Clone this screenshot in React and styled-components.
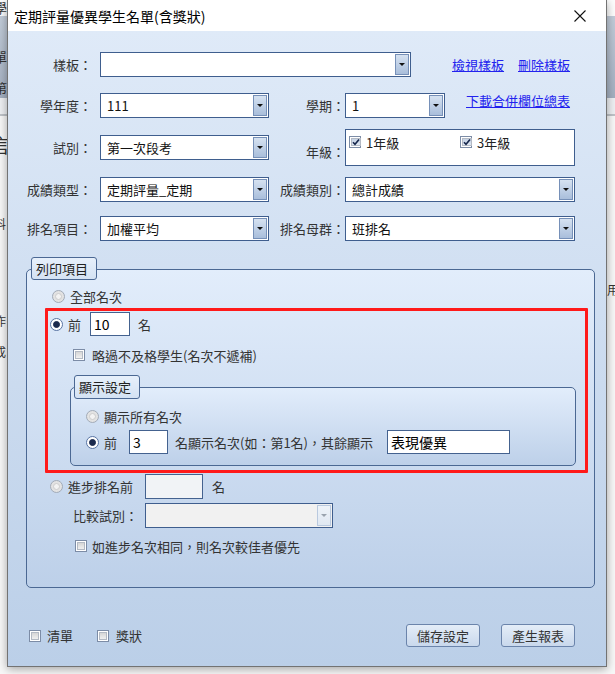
import React from "react";
import styled, { createGlobalStyle } from "styled-components";

const GlobalStyle = createGlobalStyle`
  html, body { margin: 0; padding: 0; }
  body {
    width: 615px;
    height: 674px;
    overflow: hidden;
    font-family: "Noto Sans CJK TC", "Noto Sans", sans-serif;
    font-size: 13px;
    color: #333;
    background: linear-gradient(
      to bottom,
      #fdfdfd 0 16px,
      #c2ccd9 16px,
      #a3afc0 98px,
      #eef0f3 98px,
      #eef0f3 114px,
      #bfc3c8 114px,
      #bfc3c8 116px,
      #f8f8f8 116px
    );
  }
`;

const Desktop = styled.div`
  position: relative;
  width: 615px;
  height: 674px;
  overflow: hidden;
`;

const BackChar = styled.span`
  position: absolute;
  font-size: ${({ $size }) => $size || 13}px;
  color: #333;
  line-height: 1;
`;

const Dialog = styled.div`
  position: relative;
  z-index: 1;
  margin-left: 7px;
  width: 600px;
  height: 667px;
  box-sizing: border-box;
  border: 1px solid #737373;
  border-top: none;
  display: flex;
  flex-direction: column;
  box-shadow: 0 2px 9px rgba(0, 0, 0, 0.35);
`;

const TitleBar = styled.div`
  height: 31px;
  flex-shrink: 0;
  background: #fff;
  display: flex;
  align-items: center;
  padding-left: 6px;
  font-size: 14px;
  color: #000;
`;

const CloseBox = styled.div`
  margin-left: auto;
  width: 52px;
  height: 31px;
  display: flex;
  align-items: center;
  justify-content: center;
`;

const Body = styled.div`
  flex: 1;
  background: linear-gradient(to bottom, #dfeaf8, #bbcfe8);
  padding-top: 21px;
  display: flex;
  flex-direction: column;
`;

const Row = styled.div`
  display: flex;
  align-items: center;
  height: ${({ $h }) => $h || 25}px;
  margin-top: ${({ $mt }) => $mt || 0}px;
  padding-left: ${({ $pl }) => $pl || 0}px;
  flex-shrink: 0;
`;

const Label = styled.div`
  width: ${({ $w }) => $w}px;
  margin-right: ${({ $mr }) => $mr || 0}px;
  padding-top: ${({ $pt }) => $pt || 0}px;
  text-align: right;
  white-space: nowrap;
  color: #333;
  flex-shrink: 0;
`;

const Text = styled.span`
  margin-left: ${({ $ml }) => $ml || 0}px;
  width: ${({ $w }) => ($w ? `${$w}px` : "auto")};
  white-space: nowrap;
  color: #333;
  flex-shrink: 0;
`;

const Combo = styled.div`
  width: ${({ $w }) => $w}px;
  height: 25px;
  box-sizing: border-box;
  border: 1px solid #3f5e8e;
  background: ${({ $disabled }) => ($disabled ? "#f1f1f1" : "#fff")};
  display: flex;
  align-items: center;
  padding: 1px 1px 1px 6px;
  flex-shrink: 0;
`;

const ComboValue = styled.span`
  flex: 1;
  color: #111;
  white-space: nowrap;
`;

const DropButton = styled.span`
  width: 14px;
  align-self: stretch;
  box-sizing: border-box;
  border: 1px solid ${({ $disabled }) => ($disabled ? "#b9c9df" : "#7690b8")};
  background: ${({ $disabled }) =>
    $disabled
      ? "linear-gradient(#eef3f9, #e0e8f2)"
      : "linear-gradient(#d6e2f1, #a9bedb)"};
  display: flex;
  align-items: center;
  justify-content: center;

  &::after {
    content: "";
    border-left: 3px solid transparent;
    border-right: 3px solid transparent;
    border-top: 3px solid ${({ $disabled }) => ($disabled ? "#9aa3ae" : "#111")};
  }
`;

const ListBox = styled.div`
  width: 230px;
  height: 37px;
  box-sizing: border-box;
  border: 1px solid #3f5e8e;
  background: #fff;
  display: flex;
  align-items: flex-start;
  padding: 3px 0 0 3px;
  flex-shrink: 0;
`;

const ListItem = styled.div`
  width: ${({ $w }) => $w}px;
  display: flex;
  align-items: center;
  gap: 5px;
  height: 18px;
  color: #222;
`;

const LinkText = styled.span`
  margin-left: ${({ $ml }) => $ml || 0}px;
  color: #2222ee;
  text-decoration: underline;
  white-space: nowrap;
  align-self: ${({ $top }) => ($top ? "flex-start" : "center")};
  line-height: 16px;
`;

const Group = styled.div`
  position: relative;
  box-sizing: border-box;
  margin: ${({ $margin }) => $margin};
  border: 1px solid #4b6893;
  border-radius: 5px;
  background: linear-gradient(to bottom, #e2edfb, #bdd0e9);
  padding: ${({ $pad }) => $pad};
  display: flex;
  flex-direction: column;
  flex-shrink: 0;
`;

const Legend = styled.div`
  position: absolute;
  top: -13px;
  left: ${({ $left }) => $left}px;
  height: ${({ $h }) => $h}px;
  box-sizing: border-box;
  padding: 0 8px 0 4px;
  border: 1px solid #4b6893;
  border-radius: 3px;
  background: linear-gradient(to bottom, #e7f0fb, #d4e2f3);
  line-height: ${({ $h }) => $h - 2}px;
  color: #222;
  white-space: nowrap;
`;

const Highlight = styled.div`
  margin: 2px 6px 0 18px;
  border: 3px solid #ff1a1a;
  border-radius: 1px;
  padding: 1px 0 4px;
  display: flex;
  flex-direction: column;
`;

const Radio = styled.span`
  width: 13px;
  height: 13px;
  box-sizing: border-box;
  border-radius: 50%;
  border: 1px solid ${({ $checked }) => ($checked ? "#5874a3" : "#a2abb8")};
  background: ${({ $checked }) => ($checked ? "#fff" : "#e3e3e3")};
  display: inline-flex;
  align-items: center;
  justify-content: center;
  flex-shrink: 0;

  &::after {
    content: "";
    box-sizing: border-box;
    width: ${({ $checked }) => ($checked ? 7 : 7)}px;
    height: ${({ $checked }) => ($checked ? 7 : 7)}px;
    border-radius: 50%;
    background: ${({ $checked }) => ($checked ? "#1b2a4d" : "#f3f3f3")};
    border: 1px solid ${({ $checked }) => ($checked ? "#1b2a4d" : "#cdcdcd")};
  }
`;

const Check = styled.span`
  margin-left: ${({ $ml }) => $ml || 0}px;
  width: 12px;
  height: 12px;
  box-sizing: border-box;
  border: 1px solid #7c8ca6;
  background: #fff;
  padding: 1px;
  display: inline-flex;
  flex-shrink: 0;

  & > span {
    flex: 1;
    border: 1px solid #b4bac4;
    background: ${({ $checked }) =>
      $checked
        ? "linear-gradient(#c4d1e4, #dfe7f2)"
        : "linear-gradient(#d6d6d6, #f0f0f0)"};
    display: flex;
    align-items: center;
    justify-content: center;
  }
`;

const TextBox = styled.div`
  margin-left: ${({ $ml }) => $ml || 0}px;
  width: ${({ $w }) => $w}px;
  height: ${({ $h }) => $h || 24}px;
  box-sizing: border-box;
  border: 1px solid #44628f;
  background: ${({ $disabled }) => ($disabled ? "#f1f3f6" : "#fff")};
  padding: 2px 3px;
  font-size: 14px;
  line-height: 18px;
  color: #000;
  flex-shrink: 0;
  white-space: nowrap;
`;

const Footer = styled.div`
  display: flex;
  align-items: center;
  height: 23px;
  margin-top: 36px;
  padding: 0 31px 0 21px;
`;

const Button = styled.button`
  margin-left: ${({ $ml }) => $ml};
  width: 74px;
  height: 23px;
  box-sizing: border-box;
  border: 1px solid #6b84ab;
  border-radius: 3px;
  background: linear-gradient(to bottom, #e4edf8, #c9d8ec);
  font-family: inherit;
  font-size: 13px;
  color: #333;
  padding: 0;
  line-height: 21px;
`;

const CheckBox = ({ checked, ml }) => (
  <Check $checked={checked} $ml={ml}>
    <span>
      {checked && (
        <svg width="8" height="8" viewBox="0 0 8 8">
          <path d="M1 4.2 L3 6.3 L7 1.5" fill="none" stroke="#15254a" strokeWidth="1.6" />
        </svg>
      )}
    </span>
  </Check>
);

const Select = ({ w, value, disabled }) => (
  <Combo $w={w} $disabled={disabled}>
    <ComboValue>{value}</ComboValue>
    <DropButton $disabled={disabled} />
  </Combo>
);

export default function App() {
  return (
    <Desktop>
      <GlobalStyle />
      <BackChar style={{ left: -6, top: 1 }}>學</BackChar>
      <BackChar style={{ left: -6, top: 50 }}>單</BackChar>
      <BackChar style={{ left: -6, top: 81 }}>第</BackChar>
      <BackChar $size={19} style={{ left: -9, top: 135 }}>言</BackChar>
      <BackChar $size={12} style={{ left: -6, top: 218 }}>料</BackChar>
      <BackChar $size={12} style={{ left: -6, top: 315 }}>作</BackChar>
      <BackChar $size={12} style={{ left: -6, top: 346 }}>成</BackChar>
      <BackChar $size={12} style={{ left: 607, top: 284 }}>用</BackChar>

      <Dialog>
        <TitleBar>
          定期評量優異學生名單(含獎狀)
          <CloseBox>
            <svg width="12" height="12" viewBox="0 0 12 12">
              <path d="M0.5 0.5 L11.5 11.5 M11.5 0.5 L0.5 11.5" stroke="#111" strokeWidth="1.1" />
            </svg>
          </CloseBox>
        </TitleBar>

        <Body>
          <Row>
            <Label $w={84} $mr={8}>樣板：</Label>
            <Select w={311} value="" />
            <LinkText $ml={41}>檢視樣板</LinkText>
            <LinkText $ml={14}>刪除樣板</LinkText>
          </Row>

          <Row $mt={16}>
            <Label $w={84} $mr={8}>學年度：</Label>
            <Select w={169} value="111" />
            <Label $w={76}>學期：</Label>
            <Select w={100} value="1" />
            <LinkText $ml={21} $top>下載合併欄位總表</LinkText>
          </Row>

          <Row $mt={11} $h={37}>
            <Label $w={84} $mr={8}>試別：</Label>
            <Select w={169} value="第一次段考" />
            <Label $w={76} $pt={7}>年級：</Label>
            <ListBox>
              <ListItem $w={111}>
                <CheckBox checked />
                1年級
              </ListItem>
              <ListItem $w={100}>
                <CheckBox checked />
                3年級
              </ListItem>
            </ListBox>
          </Row>

          <Row $mt={11}>
            <Label $w={84} $mr={8}>成績類型：</Label>
            <Select w={169} value="定期評量_定期" />
            <Label $w={76}>成績類別：</Label>
            <Select w={230} value="總計成績" />
          </Row>

          <Row $mt={14}>
            <Label $w={84} $mr={8}>排名項目：</Label>
            <Select w={169} value="加權平均" />
            <Label $w={76}>排名母群：</Label>
            <Select w={230} value="班排名" />
          </Row>

          <Group $margin="28px 0 0 18px" $pad="16px 0 31px" style={{ width: 569 }}>
            <Legend $left={4} $h={23}>列印項目</Legend>

            <Row $h={20} $pl={25}>
              <Radio />
              <Text $ml={5}>全部名次</Text>
            </Row>

            <Highlight>
              <Row $h={24} $pl={2}>
                <Radio $checked />
                <Text $ml={5}>前</Text>
                <TextBox $ml={9} $w={40}>10</TextBox>
                <Text $ml={8}>名</Text>
              </Row>

              <Row $h={20} $mt={9} $pl={25}>
                <CheckBox />
                <Text $ml={7}>略過不及格學生(名次不遞補)</Text>
              </Row>

              <Group $margin="22px 9px 0 22px" $pad="18px 0 11px 15px">
                <Legend $left={3} $h={24}>顯示設定</Legend>
                <Row $h={20}>
                  <Radio />
                  <Text $ml={5}>顯示所有名次</Text>
                </Row>
                <Row $h={24} $mt={4}>
                  <Radio $checked />
                  <Text $ml={5} $w={13}>前</Text>
                  <TextBox $ml={12} $w={39}>3</TextBox>
                  <Text $ml={7} $w={212}>名顯示名次(如：第1名)，其餘顯示</Text>
                  <TextBox $w={123}>表現優異</TextBox>
                </Row>
              </Group>
            </Highlight>

            <Row $mt={1} $pl={23}>
              <Radio />
              <Text $ml={5} $w={65}>進步排名前</Text>
              <TextBox $ml={12} $w={58} $h={25} $disabled />
              <Text $ml={9}>名</Text>
            </Row>

            <Row $mt={4} $pl={46}>
              <Text $w={72}>比較試別：</Text>
              <Select w={188} value="" disabled />
            </Row>

            <Row $h={20} $mt={8} $pl={48}>
              <CheckBox />
              <Text $ml={5}>如進步名次相同，則名次較佳者優先</Text>
            </Row>
          </Group>

          <Footer>
            <CheckBox />
            <Text $ml={6}>清單</Text>
            <CheckBox ml={24} />
            <Text $ml={7}>獎狀</Text>
            <Button $ml="auto">儲存設定</Button>
            <Button $ml="21px">產生報表</Button>
          </Footer>
        </Body>
      </Dialog>
    </Desktop>
  );
}
